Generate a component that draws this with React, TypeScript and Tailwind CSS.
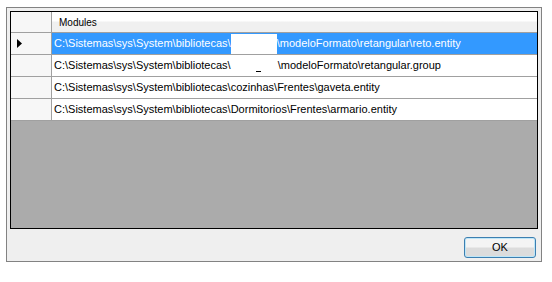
import React from 'react';

const ROWS: { parts: (string | { gap: number; fill?: boolean; mark?: boolean })[] }[] = [
  {
    parts: [
      'C:\\Sistemas\\sys\\System\\bibliotecas\\',
      { gap: 46, fill: true },
      '\\modeloFormato\\retangular\\reto.entity',
    ],
  },
  {
    parts: [
      'C:\\Sistemas\\sys\\System\\bibliotecas\\',
      { gap: 47, mark: true },
      '\\modeloFormato\\retangular.group',
    ],
  },
  { parts: ['C:\\Sistemas\\sys\\System\\bibliotecas\\cozinhas\\Frentes\\gaveta.entity'] },
  { parts: ['C:\\Sistemas\\sys\\System\\bibliotecas\\Dormitorios\\Frentes\\armario.entity'] },
];

export default function App() {
  return (
    <div
      className="h-[282px] w-[552px] bg-white pl-[6px] pt-[7px] text-[11px] text-black"
      style={{ fontFamily: '"Liberation Sans", Arial, sans-serif' }}>
      <div className="flex h-[255px] w-[536px] flex-col border border-[#828282] bg-[#efefef] px-[3px] pt-[3px]">
        <div className="flex h-[218px] flex-col border border-black bg-[#ababab]">
          {/* header */}
          <div className="flex h-[21px] border-b border-[#a0a0a0]">
            <div className="w-[41px] border-r border-[#a0a0a0] bg-[#f7f7f7]" />
            <div className="flex flex-1 items-center bg-gradient-to-b from-white from-45% to-[#f0f0f0] to-50% pl-[7px] text-[10px]">
              Modules
            </div>
          </div>
          {ROWS.map((row, i) => (
            <div key={i} className="flex h-[22px] border-b border-[#a0a0a0]">
              <div className="flex w-[41px] items-center border-r border-[#a0a0a0] bg-[#f7f7f7] pl-[6px]">
                {i === 0 && (
                  <svg width="5" height="9" viewBox="0 0 5 9">
                    <path d="M0 0 L5 4.5 L0 9 Z" fill="#000" />
                  </svg>
                )}
              </div>
              <div
                className={`flex flex-1 items-center whitespace-pre pl-[2px] ${
                  i === 0 ? 'bg-[#3399ff] text-white' : 'bg-white'
                }`}>
                {row.parts.map((p, j) =>
                  typeof p === 'string' ? (
                    <span key={j}>{p}</span>
                  ) : (
                    <span
                      key={j}
                      className={`flex h-[20px] items-end pl-[25px] ${p.fill ? 'bg-white' : ''}`}
                      style={{ width: p.gap }}>
                      {p.mark && <span className="mb-[4px] h-px w-[5px] bg-black" />}
                    </span>
                  ),
                )}
              </div>
            </div>
          ))}
        </div>
        <div className="flex flex-1 items-start justify-end pr-[2px] pt-[8px]">
          <button className="h-[21px] w-[72px] rounded-[3px] border border-[#3c7fb1] bg-gradient-to-b from-[#f4f4f4] from-45% to-[#dcdcdc] to-55% text-[11px] shadow-[inset_0_0_0_1px_#bfe6f7]">
            OK
          </button>
        </div>
      </div>
    </div>
  );
}
